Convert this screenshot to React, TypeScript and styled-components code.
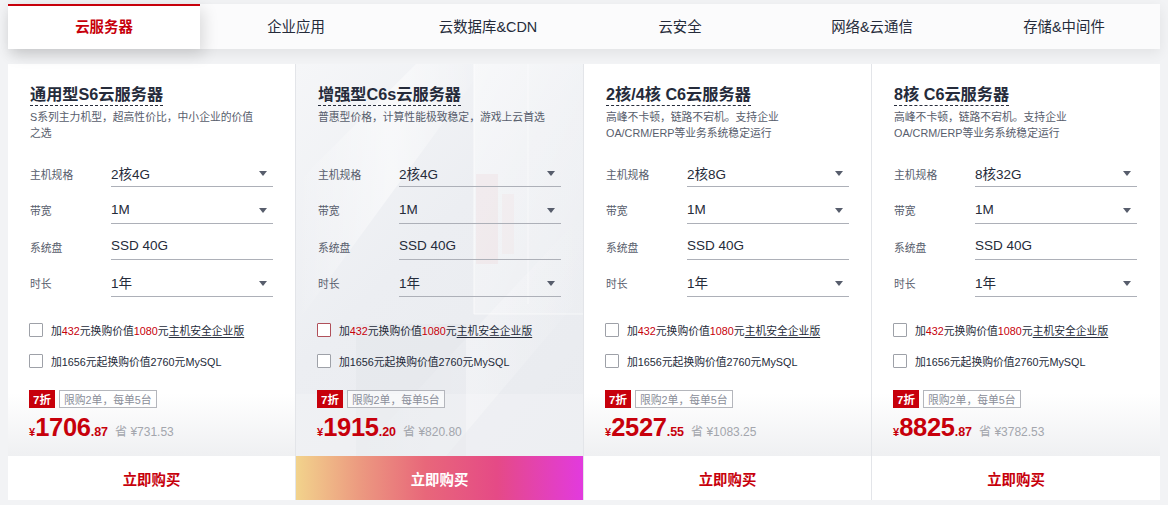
import React from "react";
import styled, { createGlobalStyle } from "styled-components";

const RED = "#c7000b";
const INK = "#252b3a";
const FONT = `"Liberation Sans", Arial, "Noto Sans CJK SC", sans-serif`;

const Global = createGlobalStyle`
  html, body { margin: 0; padding: 0; background: #f2f3f5; }
  body { font-family: ${FONT}; color: ${INK}; }
  * { box-sizing: border-box; }
`;

const Page = styled.div`
  padding: 4px 8px 0 8px;
  width: 1168px;
  height: 505px;
  overflow: hidden;
`;

const TabBar = styled.div`
  position: relative;
  z-index: 2;
  display: grid;
  grid-template-columns: repeat(6, 1fr);
  height: 45px;
  background: #fbfbfc;
  box-shadow: 0 4px 12px rgba(0, 0, 0, 0.07);
`;

const Tab = styled.div<{ $active?: boolean }>`
  display: flex;
  align-items: center;
  justify-content: center;
  font-size: 14.4px;
  color: ${(p) => (p.$active ? RED : INK)};
  font-weight: ${(p) => (p.$active ? 700 : 400)};
  background: ${(p) => (p.$active ? "#fff" : "transparent")};
  border-top: 2px solid ${(p) => (p.$active ? RED : "transparent")};
  box-shadow: ${(p) => (p.$active ? "4px 6px 14px rgba(0,0,0,0.13)" : "none")};
  padding-bottom: 5px;
`;

const Cards = styled.div`
  margin-top: 15px;
  display: grid;
  grid-template-columns: repeat(4, 1fr);
  height: 436px;
  background: #fff;
`;

const Card = styled.div<{ $last?: boolean }>`
  display: flex;
  flex-direction: column;
  border-right: ${(p) => (p.$last ? "none" : "1px solid #e3e5e9")};
  min-width: 0;
`;

const Body = styled.div<{ $featured?: boolean }>`
  position: relative;
  flex: 1;
  padding: 20px 21px 0 22px;
  overflow: hidden;
  background: ${(p) =>
    p.$featured
      ? "linear-gradient(135deg, #f5f6f8 0%, #eceef2 45%, #e9ebef 100%)"
      : "linear-gradient(180deg, #ffffff 0%, #ffffff 84%, #eff0f2 100%)"};
`;

const Deco = styled.svg`
  position: absolute;
  inset: 0;
  width: 100%;
  height: 100%;
  pointer-events: none;
`;

const Content = styled.div`
  position: relative;
`;

const Title = styled.div`
  display: inline-block;
  font-size: 16.2px;
  font-weight: 700;
  line-height: 20px;
  color: ${INK};
  border-bottom: 1px dashed ${INK};
  padding-bottom: 1px;
`;

const Desc = styled.div`
  margin-top: 4px;
  max-width: 230px;
  min-height: 31px;
  font-size: 10.8px;
  line-height: 15.5px;
  color: #575d6c;
`;

const NoWrap = styled.span`
  white-space: nowrap;
`;

const Form = styled.div`
  margin-top: 18px;
  display: flex;
  flex-direction: column;
  gap: 8.5px;
`;

const Row = styled.div`
  display: flex;
  align-items: center;
`;

const Label = styled.div`
  width: 81px;
  font-size: 10.8px;
  color: #575d6c;
  padding-top: 1px;
`;

const Select = styled.div`
  position: relative;
  width: 162px;
  height: 28px;
  display: flex;
  align-items: center;
  font-size: 13.5px;
  color: ${INK};
  border-bottom: 1px solid #adb0b8;
`;

const Caret = styled.span`
  position: absolute;
  right: 6px;
  top: 12px;
  width: 0;
  height: 0;
  border-left: 4.5px solid transparent;
  border-right: 4.5px solid transparent;
  border-top: 5px solid #575d6c;
`;

const Addons = styled.div`
  margin-top: 23px;
  display: flex;
  flex-direction: column;
  gap: 11px;
`;

const Addon = styled.label`
  display: flex;
  align-items: center;
  height: 20px;
  font-size: 10.8px;
  color: ${INK};
`;

const Box = styled.span<{ $hover?: boolean }>`
  width: 14px;
  height: 14px;
  margin-left: -1px;
  margin-right: 8px;
  border: 1px solid ${(p) => (p.$hover ? "#b0505a" : "#9ea1a8")};
  border-radius: 1px;
  background: #fff;
`;

const Red = styled.span`
  color: ${RED};
`;

const Under = styled.span`
  text-decoration: underline;
  text-underline-offset: 2px;
`;

const Tags = styled.div`
  margin-top: 19px;
  display: flex;
  gap: 4px;
  height: 18px;
`;

const Discount = styled.span`
  width: 26px;
  margin-left: -1px;
  display: flex;
  align-items: center;
  justify-content: center;
  background: ${RED};
  color: #fff;
  font-size: 11.5px;
  font-weight: 700;
`;

const Limit = styled.span`
  display: flex;
  align-items: center;
  padding: 0 4px;
  border: 1px solid #b4b6bc;
  color: #8a8e99;
  font-size: 10.8px;
  background: rgba(255, 255, 255, 0.6);
`;

const Price = styled.div`
  margin-top: 5px;
  display: flex;
  align-items: baseline;
  color: ${RED};
  line-height: 28px;
  margin-left: -1px;
`;

const Yen = styled.span`
  font-size: 11px;
  font-weight: 700;
`;

const Big = styled.span`
  font-size: 25.5px;
  font-weight: 700;
  letter-spacing: -0.3px;
`;

const Cents = styled.span`
  font-size: 12.5px;
  font-weight: 700;
`;

const Save = styled.span`
  margin-left: 7px;
  font-size: 12px;
  color: #a3a6ad;
`;

const Buy = styled.button<{ $featured?: boolean }>`
  height: 44px;
  flex: none;
  border: none;
  width: 100%;
  font-family: ${FONT};
  font-size: 14.4px;
  font-weight: 700;
  cursor: pointer;
  color: ${(p) => (p.$featured ? "#fff" : RED)};
  background: ${(p) =>
    p.$featured
      ? "linear-gradient(90deg, #f2d38c 0%, #ec9a80 22%, #e8677a 45%, #e54a86 70%, #e23ade 100%)"
      : "#fff"};
`;

type CardData = {
  title: string;
  desc: React.ReactNode;
  spec: string;
  price: string;
  cents: string;
  save: string;
  featured?: boolean;
};

const cards: CardData[] = [
  {
    title: "通用型S6云服务器",
    desc: "S系列主力机型，超高性价比，中小企业的价值之选",
    spec: "2核4G",
    price: "1706",
    cents: ".87",
    save: "¥731.53",
  },
  {
    title: "增强型C6s云服务器",
    desc: "普惠型价格，计算性能极致稳定，游戏上云首选",
    spec: "2核4G",
    price: "1915",
    cents: ".20",
    save: "¥820.80",
    featured: true,
  },
  {
    title: "2核/4核 C6云服务器",
    desc: (
      <>
        高峰不卡顿，链路不宕机。支持企业<NoWrap>OA/CRM/ERP</NoWrap>等业务系统稳定运行
      </>
    ),
    spec: "2核8G",
    price: "2527",
    cents: ".55",
    save: "¥1083.25",
  },
  {
    title: "8核 C6云服务器",
    desc: (
      <>
        高峰不卡顿，链路不宕机。支持企业<NoWrap>OA/CRM/ERP</NoWrap>等业务系统稳定运行
      </>
    ),
    spec: "8核32G",
    price: "8825",
    cents: ".87",
    save: "¥3782.53",
  },
];

const tabs = ["云服务器", "企业应用", "云数据库&CDN", "云安全", "网络&云通信", "存储&中间件"];

const Decoration = () => (
  <Deco viewBox="0 0 287 392" preserveAspectRatio="none">
    <defs>
      <linearGradient id="pane" x1="0" y1="0" x2="1" y2="1">
        <stop offset="0" stopColor="#ffffff" stopOpacity="0.5" />
        <stop offset="1" stopColor="#ffffff" stopOpacity="0.08" />
      </linearGradient>
      <linearGradient id="band" x1="0" y1="0" x2="1" y2="0">
        <stop offset="0" stopColor="#ffffff" stopOpacity="0" />
        <stop offset="0.5" stopColor="#ffffff" stopOpacity="0.5" />
        <stop offset="1" stopColor="#ffffff" stopOpacity="0" />
      </linearGradient>
    </defs>
    <polygon points="0,120 120,0 190,0 0,260" fill="url(#band)" />
    <polygon points="60,392 287,150 287,230 150,392" fill="url(#band)" opacity="0.6" />
    <rect x="178" y="0" width="109" height="250" fill="url(#pane)" />
    <line x1="178" y1="0" x2="178" y2="250" stroke="#ffffff" strokeOpacity="0.7" />
    <line x1="232" y1="0" x2="232" y2="240" stroke="#ffffff" strokeOpacity="0.5" />
    <line x1="178" y1="250" x2="287" y2="250" stroke="#ffffff" strokeOpacity="0.6" />
    <rect x="180" y="110" width="22" height="90" fill="#efd9dc" opacity="0.35" />
    <rect x="206" y="130" width="12" height="60" fill="#f1e0e2" opacity="0.3" />
    <rect x="60" y="260" width="110" height="132" fill="#e2e4e8" opacity="0.4" />
    <rect x="0" y="330" width="287" height="62" fill="#ffffff" opacity="0.2" />
  </Deco>
);

const ProductCard = ({ data, last }: { data: CardData; last?: boolean }) => (
  <Card $last={last}>
    <Body $featured={data.featured}>
      {data.featured && <Decoration />}
      <Content>
        <Title>{data.title}</Title>
        <Desc>{data.desc}</Desc>
        <Form>
          <Row>
            <Label>主机规格</Label>
            <Select>
              {data.spec}
              <Caret />
            </Select>
          </Row>
          <Row>
            <Label>带宽</Label>
            <Select>
              1M
              <Caret />
            </Select>
          </Row>
          <Row>
            <Label>系统盘</Label>
            <Select>SSD 40G</Select>
          </Row>
          <Row>
            <Label>时长</Label>
            <Select>
              1年
              <Caret />
            </Select>
          </Row>
        </Form>
        <Addons>
          <Addon>
            <Box $hover={data.featured} />
            <span>
              加<Red>432</Red>元换购价值<Red>1080</Red>元<Under>主机安全企业版</Under>
            </span>
          </Addon>
          <Addon>
            <Box />
            <span>加1656元起换购价值2760元MySQL</span>
          </Addon>
        </Addons>
        <Tags>
          <Discount>7折</Discount>
          <Limit>限购2单，每单5台</Limit>
        </Tags>
        <Price>
          <Yen>¥</Yen>
          <Big>{data.price}</Big>
          <Cents>{data.cents}</Cents>
          <Save>省 {data.save}</Save>
        </Price>
      </Content>
    </Body>
    <Buy $featured={data.featured}>立即购买</Buy>
  </Card>
);

export default function App() {
  return (
    <>
      <Global />
      <Page>
        <TabBar>
          {tabs.map((t, i) => (
            <Tab key={t} $active={i === 0}>
              {t}
            </Tab>
          ))}
        </TabBar>
        <Cards>
          {cards.map((c, i) => (
            <ProductCard key={c.title} data={c} last={i === cards.length - 1} />
          ))}
        </Cards>
      </Page>
    </>
  );
}
